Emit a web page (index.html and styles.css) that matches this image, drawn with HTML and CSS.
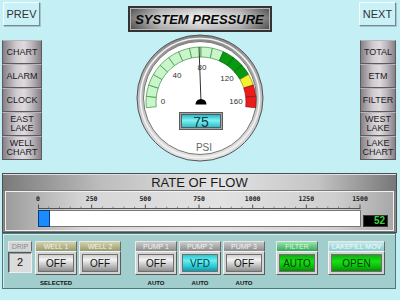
FILE: index.html
```html
<!DOCTYPE html>
<html>
<head>
<meta charset="utf-8">
<link rel="stylesheet" href="styles.css">
</head>
<body>
<div class="screen">
  <header class="top">
    <div class="nav">PREV</div>
    <div class="title"><span>SYSTEM PRESSURE</span></div>
    <div class="nav">NEXT</div>
  </header>

  <main class="mid">
    <nav class="side side-left">
      <div class="sbtn">CHART</div>
      <div class="sbtn">ALARM</div>
      <div class="sbtn">CLOCK</div>
      <div class="sbtn">EAST<br>LAKE</div>
      <div class="sbtn">WELL<br>CHART</div>
    </nav>

    <div class="gauge">
      <svg width="130" height="130" viewBox="135 33 130 130">
        <defs>
          <linearGradient id="bz" x1="0" y1="0" x2="0" y2="1">
            <stop offset="0" stop-color="#868686"/>
            <stop offset="0.5" stop-color="#c0c0c0"/>
            <stop offset="1" stop-color="#e4e4e4"/>
          </linearGradient>
          <linearGradient id="cy" x1="0" y1="0" x2="0" y2="1">
            <stop offset="0" stop-color="#22b4c4"/>
            <stop offset="0.45" stop-color="#80f0f2"/>
            <stop offset="1" stop-color="#28bccc"/>
          </linearGradient>
        </defs>
        <circle cx="200" cy="98" r="63" fill="url(#bz)" stroke="#555" stroke-width="1"/>
        <circle cx="200" cy="98" r="59.5" fill="none" stroke="#f2f2f2" stroke-width="1.6"/>
        <circle cx="200" cy="98" r="56.5" fill="#fff" stroke="#777" stroke-width="1"/>
        <g transform="translate(1 0)" stroke-width="0.7">
          <g class="seg-light">
            <path d="M145.30 107.75A55 55 0 0 1 145.30 96.25L155.25 97.30A45 45 0 0 0 155.25 106.70Z"/>
            <path d="M145.30 96.25A55 55 0 0 1 147.69 85.00L157.20 88.09A45 45 0 0 0 155.25 97.30Z"/>
            <path d="M147.69 85.00A55 55 0 0 1 152.37 74.50L161.03 79.50A45 45 0 0 0 157.20 88.09Z"/>
            <path d="M152.37 74.50A55 55 0 0 1 159.13 65.20L166.56 71.89A45 45 0 0 0 161.03 79.50Z"/>
            <path d="M159.13 65.20A55 55 0 0 1 167.67 57.50L173.55 65.59A45 45 0 0 0 166.56 71.89Z"/>
            <path d="M167.67 57.50A55 55 0 0 1 177.63 51.75L181.70 60.89A45 45 0 0 0 173.55 65.59Z"/>
            <path d="M177.63 51.75A55 55 0 0 1 188.56 48.20L190.64 57.98A45 45 0 0 0 181.70 60.89Z"/>
            <path d="M188.56 48.20A55 55 0 0 1 200 47L200 57A45 45 0 0 0 190.64 57.98Z"/>
            <path d="M200 47A55 55 0 0 1 211.44 48.20L209.36 57.98A45 45 0 0 0 200 57Z"/>
            <path d="M211.44 48.20A55 55 0 0 1 222.37 51.75L218.30 60.89A45 45 0 0 0 209.36 57.98Z"/>
          </g>
          <g class="seg-dark">
            <path d="M222.37 51.75A55 55 0 0 1 232.33 57.50L226.45 65.59A45 45 0 0 0 218.30 60.89Z"/>
            <path d="M232.33 57.50A55 55 0 0 1 240.87 65.20L233.44 71.89A45 45 0 0 0 226.45 65.59Z"/>
            <path d="M240.87 65.20A55 55 0 0 1 247.63 74.50L238.97 79.50A45 45 0 0 0 233.44 71.89Z"/>
          </g>
          <path class="seg-yellow" d="M247.63 74.50A55 55 0 0 1 252.31 85.00L242.80 88.09A45 45 0 0 0 238.97 79.50Z"/>
          <g class="seg-red">
            <path d="M252.31 85.00A55 55 0 0 1 254.70 96.25L244.75 97.30A45 45 0 0 0 242.80 88.09Z"/>
            <path d="M254.70 96.25A55 55 0 0 1 254.70 107.75L244.75 106.70A45 45 0 0 0 244.75 97.30Z"/>
          </g>
        </g>
        <g class="glabel">
          <text x="163" y="104">0</text>
          <text x="177" y="78">40</text>
          <text x="202" y="70">80</text>
          <text x="227" y="81">120</text>
          <text x="236" y="104">160</text>
        </g>
        <line x1="201" y1="102" x2="199" y2="47" stroke="#333" stroke-width="1"/>
        <path d="M195.5 104.5A5.5 5.5 0 0 1 206.5 104.5Z" fill="#000"/>
        <rect x="179.5" y="112.5" width="43" height="17" fill="#a4a4a4" stroke="#5c5c5c"/>
        <rect x="181.5" y="114.5" width="39" height="13" fill="url(#cy)" stroke="#4a4a4a" stroke-width="0.8"/>
        <text class="gnum" x="201" y="126.5">75</text>
        <text class="gunit" x="204" y="151">PSI</text>
      </svg>
    </div>

    <nav class="side side-right">
      <div class="sbtn">TOTAL</div>
      <div class="sbtn">ETM</div>
      <div class="sbtn">FILTER</div>
      <div class="sbtn">WEST<br>LAKE</div>
      <div class="sbtn">LAKE<br>CHART</div>
    </nav>
  </main>

  <section class="flow">
    <div class="flow-title">RATE OF FLOW</div>
    <div class="flow-body">
      <svg class="scale" width="356" height="38" viewBox="6 192 356 38">
        <g class="slabel">
          <text x="38" y="201">0</text>
          <text x="91.67" y="201">250</text>
          <text x="145.33" y="201">500</text>
          <text x="199" y="201">750</text>
          <text x="252.67" y="201">1000</text>
          <text x="306.33" y="201">1250</text>
          <text x="360" y="201">1500</text>
        </g>
        <line x1="38" y1="208.5" x2="360.5" y2="208.5" stroke="#333" stroke-width="0.8"/>
        <path stroke="#333" stroke-width="0.8" d="M38.5 204.5V208.5M91.67 204.5V208.5M145.33 204.5V208.5M199 204.5V208.5M252.67 204.5V208.5M306.33 204.5V208.5M360 204.5V208.5"/>
        <path stroke="#555" stroke-width="0.6" d="M48.73 206.5V208.5M59.47 206.5V208.5M70.2 206.5V208.5M80.93 206.5V208.5M102.4 206.5V208.5M113.13 206.5V208.5M123.87 206.5V208.5M134.6 206.5V208.5M156.07 206.5V208.5M166.8 206.5V208.5M177.53 206.5V208.5M188.27 206.5V208.5M209.73 206.5V208.5M220.47 206.5V208.5M231.2 206.5V208.5M241.93 206.5V208.5M263.4 206.5V208.5M274.13 206.5V208.5M284.87 206.5V208.5M295.6 206.5V208.5M317.07 206.5V208.5M327.8 206.5V208.5M338.53 206.5V208.5M349.27 206.5V208.5"/>
        <rect x="38.5" y="210.5" width="322" height="16" fill="#fff" stroke="#777"/>
        <rect x="38.5" y="210.5" width="11" height="16" fill="#1a8cff" stroke="#063c78"/>
      </svg>
      <div class="flow-val">52</div>
    </div>
  </section>

  <section class="ctrl">
    <div class="grp grp-drip">
      <div class="lbl lbl-drip">DRIP</div>
      <div class="drip-val">2</div>
    </div>
    <div class="grp g-well1">
      <div class="lbl lbl-well">WELL 1</div>
      <div class="btn"><div class="face face-gray">OFF</div></div>
      <div class="cap">SELECTED</div>
    </div>
    <div class="grp g-tight">
      <div class="lbl lbl-well">WELL 2</div>
      <div class="btn"><div class="face face-gray">OFF</div></div>
    </div>
    <div class="grp g-pump1">
      <div class="lbl lbl-pump">PUMP 1</div>
      <div class="btn"><div class="face face-gray">OFF</div></div>
      <div class="cap">AUTO</div>
    </div>
    <div class="grp g-tight">
      <div class="lbl lbl-pump">PUMP 2</div>
      <div class="btn"><div class="face face-cyan">VFD</div></div>
      <div class="cap">AUTO</div>
    </div>
    <div class="grp g-tight">
      <div class="lbl lbl-pump">PUMP 3</div>
      <div class="btn"><div class="face face-gray">OFF</div></div>
      <div class="cap">AUTO</div>
    </div>
    <div class="grp g-filter">
      <div class="lbl lbl-filter">FILTER</div>
      <div class="btn"><div class="face face-green">AUTO</div></div>
    </div>
    <div class="grp grp-wide g-lake">
      <div class="lbl lbl-lake">LAKEFILL MOV</div>
      <div class="btn"><div class="face face-green">OPEN</div></div>
    </div>
  </section>
</div>
</body>
</html>
```

FILE: styles.css
```css
* { box-sizing: border-box; }

body {
  margin: 0;
  width: 400px;
  height: 300px;
  overflow: hidden;
  background: #c4eff5;
  font-family: "Liberation Sans", Arial, sans-serif;
}

/* top bar */
.top {
  display: flex;
  justify-content: space-between;
  align-items: flex-start;
  height: 33px;
  padding: 2px 4px 0 3px;
}

.nav {
  width: 37px;
  height: 24px;
  display: flex;
  align-items: center;
  justify-content: center;
  font-size: 11px;
  color: #333;
  background: #c9f1f7;
  border: 1px solid;
  border-color: #f6ffff #6f8d92 #6f8d92 #f6ffff;
  box-shadow: 1px 1px 0 #a6c4c8;
}

.title {
  width: 144px;
  height: 26px;
  margin-top: 4px;
  border: 2px solid #333;
  box-shadow: inset 0 0 0 1px #b8b8b8;
  background:
    linear-gradient(180deg, rgba(0,0,0,0.18), rgba(255,255,255,0.15) 45%, rgba(0,0,0,0.2)),
    linear-gradient(90deg, #5e5e5e, #cfcfcf 22%, #f2f2f2 50%, #cfcfcf 78%, #5e5e5e);
  display: flex;
  align-items: center;
  justify-content: center;
  font-size: 13px;
  font-weight: bold;
  font-style: italic;
  color: #0a0a0a;
}

/* middle area */
.mid {
  display: grid;
  grid-template-columns: 40px 1fr 36px;
  height: 140px;
  padding: 0 4px 0 2px;
}

.side {
  display: flex;
  flex-direction: column;
  margin-top: 7px;
}

.sbtn {
  height: 24px;
  display: flex;
  align-items: center;
  justify-content: center;
  text-align: center;
  font-size: 9px;
  line-height: 9px;
  color: #1c1c1c;
  border: 1px solid #5c5a5c;
  border-top-color: #b8b4b8;
  background: linear-gradient(90deg, #858186, #cfcbd0 35%, #dedade 55%, #bdb9be 75%, #858186);
}

.gauge {
  justify-self: center;
  margin-right: 2px;
  width: 130px;
  height: 130px;
}

.gauge svg { display: block; }

.seg-light path { fill: #c9f5cb; stroke: #3f8f44; }
.seg-dark path { fill: #079a10; stroke: #05600a; }
.seg-yellow { fill: #f4f032; stroke: #8a8a10; }
.seg-red path { fill: #ec1c1c; stroke: #8e1010; }

.glabel text {
  font-family: "Liberation Sans", Arial, sans-serif;
  font-size: 8px;
  fill: #333;
  text-anchor: middle;
}

.gnum {
  font-family: "Liberation Sans", Arial, sans-serif;
  font-size: 14px;
  fill: #0c3a46;
  text-anchor: middle;
}

.gunit {
  font-family: "Liberation Sans", Arial, sans-serif;
  font-size: 10px;
  fill: #666;
  text-anchor: middle;
}

/* rate of flow */
.flow {
  height: 60px;
  margin: 0 3px 0 2px;
  border: 1px solid #4e4e4e;
  background: linear-gradient(90deg, #8a8a8a, #b8b8b8 50%, #8a8a8a);
}

.flow-title {
  height: 17px;
  border-top: 1px solid #e0e0e0;
  border-bottom: 1px solid #6a6a6a;
  background: linear-gradient(90deg, #7a7a7a, #bdbdbd 25%, #e4e4e4 55%, #c4c4c4 80%, #777);
  text-align: center;
  font-size: 13px;
  line-height: 15px;
  color: #1a1a1a;
}

.flow-body {
  display: flex;
  height: 40px;
  margin: 0 2px 0 2px;
  border: 1px solid #f2f2f2;
  box-shadow: 0 0 0 1px #7a7a7a;
  background: linear-gradient(90deg, #9c9c9c, #d6d6d6 20%, #e2e2e2 55%, #cfcfcf 85%, #a8a8a8);
}

.scale { display: block; flex: none; overflow: visible; }

.flow-val {
  align-self: flex-end;
  width: 25px;
  height: 12px;
  margin: 0 0 3px 1px;
  background: #000;
  border: 1px solid #3a3a3a;
  color: #3fd23f;
  font-size: 10px;
  font-weight: bold;
  line-height: 10px;
  text-align: right;
  padding-right: 2px;
}

.slabel text {
  font-family: "DejaVu Sans Mono", monospace;
  font-weight: bold;
  font-size: 6.5px;
  fill: #222;
  text-anchor: middle;
}

/* bottom control panel */
.ctrl {
  display: flex;
  align-items: flex-start;
  height: 56px;
  margin: 0 4px 0 2px;
  padding: 7px 0 0 5px;
  border: 1px solid #4a7a7a;
  box-shadow: inset 1px 1px 0 #d6f0f0;
  background: #a2cdcd;
}

.grp {
  width: 42px;
  display: flex;
  flex-direction: column;
}

.grp-drip { width: 24px; }
.grp-wide { width: 57px; }

.g-well1 { margin-left: 3px; }
.g-tight { margin-left: 2px; }
.g-pump1 { margin-left: 14px; }
.g-filter { margin-left: 11px; }
.g-lake { margin-left: 10px; }

.lbl {
  height: 10px;
  font-size: 7px;
  line-height: 10px;
  text-align: center;
  white-space: nowrap;
  border: 1px solid;
  border-color: #e8e8e8 #6a6a6a transparent #e8e8e8;
  border-bottom: none;
}

.lbl-drip { background: #d6d6d6; color: #8a8a8a; }
.lbl-well { background: linear-gradient(#d2d2aa, #9a9a70); color: #f4f4e4; }
.lbl-pump { background: linear-gradient(#cacaca, #8c8c8c); color: #f4f4f4; }
.lbl-filter { background: linear-gradient(#96e6a8, #3aa662); color: #d6fad6; }
.lbl-lake { background: linear-gradient(#c6ecec, #8ccaca); color: #f2fcfc; }

.drip-val {
  height: 21px;
  margin-top: 1px;
  border: 1px solid;
  border-color: #555 #f0f0f0 #f0f0f0 #555;
  box-shadow: inset 1px 1px 0 #999;
  background: #dcdcdc;
  font-size: 11px;
  line-height: 19px;
  text-align: center;
  color: #111;
}

.btn {
  height: 24px;
  padding: 2px;
  border: 1px solid;
  border-color: #f4f4f4 #5a5a5a #5a5a5a #f4f4f4;
  background: #d4d4d4;
}

.face {
  height: 100%;
  display: flex;
  align-items: center;
  justify-content: center;
  font-size: 10px;
  border: 1px solid #6e6e6e;
}

.face-gray {
  color: #111;
  background: linear-gradient(180deg, #cfcfcf 0%, #f4f4f4 30%, #c2c2c2 65%, #8e8e8e 100%);
}

.face-cyan {
  color: #0a3a42;
  background: linear-gradient(180deg, #28c8d4 0%, #6aeef0 35%, #2ccad6 70%, #109cac 100%);
}

.face-green {
  color: #0c380c;
  background: linear-gradient(180deg, #0fae0f 0%, #16e016 40%, #0cc00c 70%, #068c06 100%);
}

.cap {
  margin-top: 4px;
  height: 8px;
  font-size: 6px;
  line-height: 8px;
  font-weight: bold;
  text-align: center;
  color: #111;
}
```
